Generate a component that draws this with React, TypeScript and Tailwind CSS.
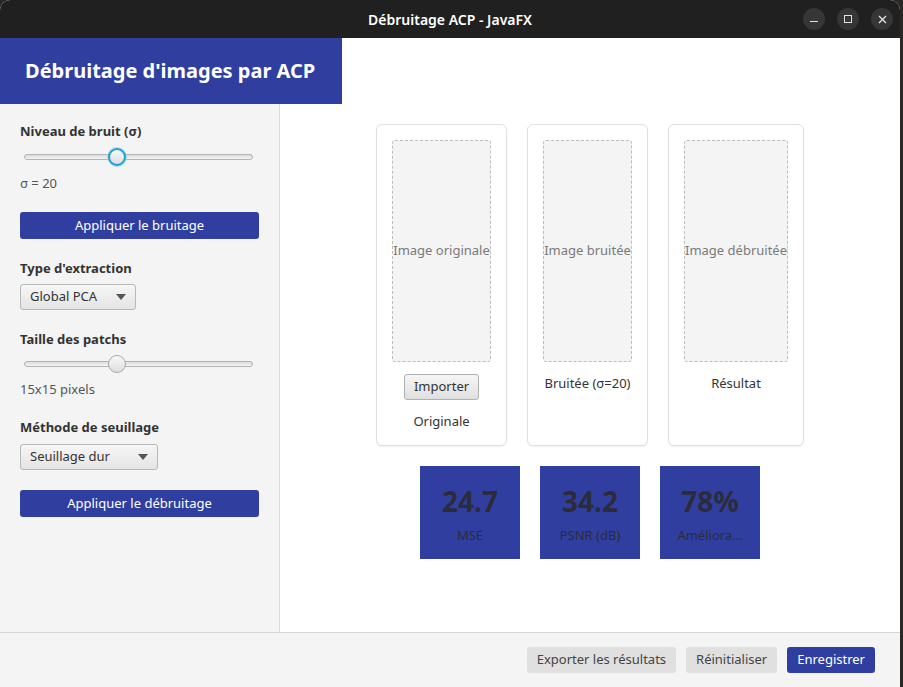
import React from "react";

const font = { fontFamily: '"Noto Sans", "Open Sans", "DejaVu Sans", sans-serif' };

function Slider({ pos, focused }: { pos: number; focused?: boolean }) {
  return (
    <div className="relative h-[20px] ml-[4px] mr-[6px]">
      <div className="absolute left-0 right-0 top-[7px] h-[6px] rounded-full border border-[#b4b4b4] bg-gradient-to-b from-[#dcdcdc] to-[#f4f4f4]" />
      <div
        className={
          "absolute top-[1px] w-[18px] h-[18px] rounded-full bg-gradient-to-b from-[#f8f8f8] to-[#dedede] " +
          (focused ? "border-2 border-[#1e9fd4] shadow-[0_0_0_1px_#a8dcf0]" : "border border-[#a8a8a8]")
        }
        style={{ left: `calc(${pos * 100}% - 9px)` }}
      />
    </div>
  );
}

function Combo({ label, w }: { label: string; w: string }) {
  return (
    <div
      className={
        "h-[26px] flex items-center justify-between pl-[9px] pr-[9px] rounded-[3px] border border-[#b8b8b8] bg-gradient-to-b from-[#f6f6f6] to-[#e4e4e4] text-[13px] text-[#333] " +
        w
      }
    >
      <span>{label}</span>
      <svg width="10" height="6" viewBox="0 0 10 6">
        <path d="M0 0 L10 0 L5 6 Z" fill="#555" />
      </svg>
    </div>
  );
}

function Card({ text, w, children }: { text: string; w: string; children: React.ReactNode }) {
  return (
    <div className="flex flex-col items-center p-[15px] rounded-[6px] border border-[#e0e0e0] bg-white shadow-[0_1px_2px_rgba(0,0,0,0.06)]">
      <div
        className={
          "h-[222px] flex items-center justify-center rounded-[3px] border border-dashed border-[#bdbdbd] bg-[#f4f4f4] text-[13px] text-[#7a7a7a] whitespace-nowrap " +
          w
        }
      >
        {text}
      </div>
      {children}
    </div>
  );
}

function Stat({ value, label }: { value: string; label: string }) {
  return (
    <div className="w-[100px] h-[93px] bg-[#303f9f] flex flex-col items-center justify-center gap-[6px]">
      <div className="text-[28px] leading-[38px] font-bold text-[#2b2b3a]">{value}</div>
      <div className="text-[13px] leading-[18px] text-[#2b2b3a]">{label}</div>
    </div>
  );
}

export default function App() {
  return (
    <div className="w-[903px] h-[687px] bg-[#2a2826] flex overflow-hidden" style={font}>
      <div className="w-[900px] h-[687px] flex flex-col rounded-t-[10px] overflow-hidden bg-white">
        {/* Title bar */}
        <div className="h-[38px] bg-[#202020] flex items-center relative shrink-0">
          <div className="flex-1 text-center text-white text-[14px] font-semibold">Débruitage ACP - JavaFX</div>
          <div className="absolute right-[7px] top-[8px] flex gap-[12px]">
            <div className="w-[22px] h-[22px] rounded-full bg-[#363636] flex items-center justify-center">
              <div className="w-[8px] h-[1.5px] bg-[#e0e0e0] mt-[5px]" />
            </div>
            <div className="w-[22px] h-[22px] rounded-full bg-[#363636] flex items-center justify-center">
              <div className="w-[8px] h-[8px] border-[1.5px] border-[#e0e0e0]" />
            </div>
            <div className="w-[22px] h-[22px] rounded-full bg-[#363636] flex items-center justify-center">
              <svg width="9" height="9" viewBox="0 0 9 9">
                <path d="M1 1 L8 8 M8 1 L1 8" stroke="#e0e0e0" strokeWidth="1.4" />
              </svg>
            </div>
          </div>
        </div>

        {/* Header */}
        <div className="h-[66px] shrink-0 flex">
          <div className="w-[342px] bg-[#303f9f] flex items-center pl-[25px] text-white text-[20px] font-bold whitespace-nowrap">
            Débruitage d'images par ACP
          </div>
          <div className="flex-1 bg-white" />
        </div>

        {/* Middle */}
        <div className="flex-1 flex min-h-0">
          <div className="w-[280px] shrink-0 bg-[#f4f4f4] border-r border-[#dcdcdc] pt-[18px] px-[20px] flex flex-col">
            <div className="text-[13px] leading-[18px] font-bold text-[#333]">Niveau de bruit (σ)</div>
            <div className="mt-[7px]">
              <Slider pos={0.406} focused />
            </div>
            <div className="mt-[7px] text-[13px] leading-[18px] text-[#555]">σ = 20</div>
            <div className="mt-[20px] h-[27px] rounded-[3px] bg-[#303f9f] text-white text-[13px] flex items-center justify-center">
              Appliquer le bruitage
            </div>
            <div className="mt-[20px] text-[13px] leading-[18px] font-bold text-[#333]">Type d'extraction</div>
            <div className="mt-[7px]">
              <Combo label="Global PCA" w="w-[116px]" />
            </div>
            <div className="mt-[20px] text-[13px] leading-[18px] font-bold text-[#333]">Taille des patchs</div>
            <div className="mt-[6px]">
              <Slider pos={0.406} />
            </div>
            <div className="mt-[6px] text-[13px] leading-[18px] text-[#555]">15x15 pixels</div>
            <div className="mt-[20px] text-[13px] leading-[18px] font-bold text-[#333]">Méthode de seuillage</div>
            <div className="mt-[8px]">
              <Combo label="Seuillage dur" w="w-[138px]" />
            </div>
            <div className="mt-[20px] h-[27px] rounded-[3px] bg-[#303f9f] text-white text-[13px] flex items-center justify-center">
              Appliquer le débruitage
            </div>
          </div>

          <div className="flex-1 bg-white pt-[20px] flex flex-col items-center">
            <div className="flex gap-[20px] items-stretch">
              <Card text="Image originale" w="w-[99px]">
                <div className="mt-[12px] h-[26px] px-[9px] flex items-center rounded-[3px] border border-[#b0b0b0] bg-gradient-to-b from-[#f6f6f6] to-[#e0e0e0] text-[13px] text-[#333]">
                  Importer
                </div>
                <div className="mt-[12px] text-[13px] leading-[18px] text-[#333]">Originale</div>
              </Card>
              <Card text="Image bruitée" w="w-[89px]">
                <div className="mt-[12px] text-[13px] leading-[18px] text-[#333]">Bruitée (σ=20)</div>
              </Card>
              <Card text="Image débruitée" w="w-[104px]">
                <div className="mt-[12px] text-[13px] leading-[18px] text-[#333]">Résultat</div>
              </Card>
            </div>
            <div className="mt-[20px] flex gap-[20px]">
              <Stat value="24.7" label="MSE" />
              <Stat value="34.2" label="PSNR (dB)" />
              <Stat value="78%" label="Améliora..." />
            </div>
          </div>
        </div>

        {/* Bottom bar */}
        <div className="h-[55px] shrink-0 bg-[#f4f4f4] border-t border-[#d6d6d6] flex items-center justify-end gap-[10px] pr-[25px]">
          <div className="h-[26px] px-[10px] flex items-center rounded-[3px] bg-[#e0e0e0] text-[13px] text-[#444]">
            Exporter les résultats
          </div>
          <div className="h-[26px] px-[10px] flex items-center rounded-[3px] bg-[#e0e0e0] text-[13px] text-[#444]">
            Réinitialiser
          </div>
          <div className="h-[26px] px-[10px] flex items-center rounded-[3px] bg-[#303f9f] text-[13px] text-white">
            Enregistrer
          </div>
        </div>
      </div>
    </div>
  );
}
